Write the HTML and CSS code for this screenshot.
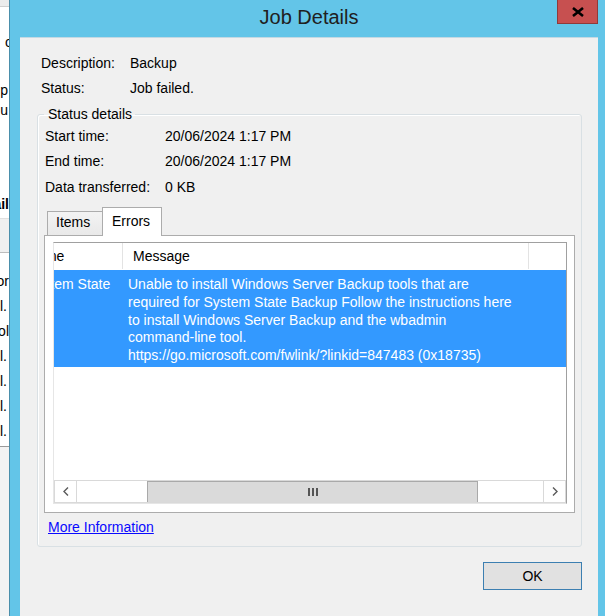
FILE: index.html
```html
<!DOCTYPE html>
<html lang="en">
<head>
<meta charset="utf-8">
<title>Job Details</title>
<link rel="stylesheet" href="styles.css">
</head>
<body>
<div class="desktop">
  <div class="bgapp">
    <div class="bg-head"></div>
    <div class="bg-line m-c"><span class="tail">c</span></div>
    <div class="bg-line m-p"><span class="tail1">p</span></div>
    <div class="bg-line m-u"><span class="tail1">u</span></div>
    <div class="bg-line m-ail bold"><span>ail</span></div>
    <div class="bg-band"></div>
    <div class="bg-rows">
      <div class="bg-row"><span>or</span></div>
      <div class="bg-row"><span class="tail2">l.</span></div>
      <div class="bg-row"><span>ol</span></div>
      <div class="bg-row"><span class="tail2">l.</span></div>
      <div class="bg-row"><span class="tail2">l.</span></div>
      <div class="bg-row"><span class="tail2">l.</span></div>
      <div class="bg-row"><span class="tail2">l.</span></div>
    </div>
    <div class="bg-foot"></div>
  </div>

  <div class="dialog">
    <div class="titlebar">
      <div class="title">Job Details</div>
      <div class="close">
        <svg width="14" height="10" viewBox="0 0 14 10"><path d="M2 1 L12 9 M12 1 L2 9" stroke="#000" stroke-width="2.6" fill="none"/></svg>
      </div>
    </div>
    <div class="client">
      <div class="info">
        <div class="kv"><span class="k">Description:</span><span>Backup</span></div>
        <div class="kv"><span class="k">Status:</span><span>Job failed.</span></div>
      </div>
      <fieldset class="group">
        <legend>Status details</legend>
        <div class="rows">
          <div class="kv2"><span class="k2">Start time:</span><span>20/06/2024 1:17 PM</span></div>
          <div class="kv2"><span class="k2">End time:</span><span>20/06/2024 1:17 PM</span></div>
          <div class="kv2"><span class="k2">Data transferred:</span><span>0 KB</span></div>
        </div>
        <div class="tabs">
          <div class="tab items">Items</div>
          <div class="tab sel">Errors</div>
        </div>
        <div class="panel">
          <div class="list">
            <div class="viewport">
              <div class="content">
                <div class="hdr">
                  <div class="c1">Name</div>
                  <div class="c2">Message</div>
                  <div class="c3"></div>
                </div>
                <div class="row">
                  <div class="c1">System State</div>
                  <div class="c2">Unable to install Windows Server Backup tools that are<br>required for System State Backup Follow the instructions here<br>to install Windows Server Backup and the wbadmin<br>command-line tool.<br>https://go.microsoft.com/fwlink/?linkid=847483 (0x18735)</div>
                  <div class="c3"></div>
                </div>
              </div>
            </div>
            <div class="hscroll">
              <div class="sb-btn left">
                <svg width="6" height="9" viewBox="0 0 6 9"><path d="M5 0.5 L1 4.5 L5 8.5" stroke="#5a5a5a" stroke-width="1.4" fill="none"/></svg>
              </div>
              <div class="sb-track t1"></div>
              <div class="sb-thumb">
                <svg width="10" height="8" viewBox="0 0 10 8"><rect x="0" y="0" width="2" height="8" fill="#555"/><rect x="4" y="0" width="2" height="8" fill="#555"/><rect x="8" y="0" width="2" height="8" fill="#555"/></svg>
              </div>
              <div class="sb-track t2"></div>
              <div class="sb-btn right">
                <svg width="6" height="9" viewBox="0 0 6 9"><path d="M1 0.5 L5 4.5 L1 8.5" stroke="#5a5a5a" stroke-width="1.4" fill="none"/></svg>
              </div>
            </div>
          </div>
        </div>
        <a class="more" href="#">More Information</a>
      </fieldset>
      <div class="buttons">
        <button class="ok">OK</button>
      </div>
    </div>
  </div>
</div>
</body>
</html>
```

FILE: styles.css
```css
html, body {
  margin: 0;
  padding: 0;
}

body {
  width: 605px;
  height: 616px;
  overflow: hidden;
  background: #ffffff;
  font-family: "Liberation Sans", Arial, sans-serif;
  font-size: 14px;
  color: #000;
}

.desktop {
  position: relative;
  width: 605px;
  height: 616px;
  overflow: hidden;
}

/* ---------- background application (mostly hidden) ---------- */
.bgapp {
  width: 9px;
  height: 616px;
  overflow: hidden;
  display: flex;
  flex-direction: column;
  background: #fff;
}

.bg-head {
  height: 6px;
  flex: none;
  background: #ececec;
  border-bottom: 1px solid #cfcfcf;
}

.bg-line {
  height: 16px;
  line-height: 16px;
  flex: none;
  display: flex;
  justify-content: flex-end;
  white-space: nowrap;
}

.bg-line.bold { font-weight: bold; }
.m-c { margin-top: 27px; }
.m-p { margin-top: 32px; }
.m-u { margin-top: 4px; }
.m-ail { margin-top: 78px; }

.tail { margin-right: -3px; }
.tail1 { margin-right: 1px; }
.tail2 { margin-right: 2px; }

.bg-band {
  flex: none;
  height: 33px;
  margin-top: 6px;
  background: #f0f0f0;
  border-top: 1px solid #e0e0e0;
  border-bottom: 1px solid #bdbdbd;
}

.bg-rows {
  margin-top: 16px;
  display: flex;
  flex-direction: column;
  flex: none;
}

.bg-row {
  height: 25px;
  line-height: 25px;
  display: flex;
  justify-content: flex-end;
  white-space: nowrap;
}

.bg-foot {
  margin-top: 2px;
  flex: 1;
  border-top: 1px solid #9a9a9a;
  background: #f3f3f3;
}

/* ---------- dialog window ---------- */
.dialog {
  position: absolute;
  left: 9px;
  top: 0;
  width: 596px;
  height: 640px;
  box-sizing: border-box;
  border-left: 1px solid #4a8fab;
  background: #63c5e8;
  padding: 0 7px 0 10px;
  display: flex;
  flex-direction: column;
}

.titlebar {
  height: 37px;
  flex: none;
  display: flex;
  align-items: flex-start;
}

.title {
  flex: 1;
  padding-left: 41px;
  padding-top: 7px;
  text-align: center;
  font-size: 20px;
  line-height: 20px;
  color: #202020;
}

.close {
  width: 41px;
  height: 24px;
  box-sizing: border-box;
  background: #c75050;
  border: 1px solid #8f3a3a;
  border-top: none;
  display: flex;
  align-items: center;
  justify-content: center;
}

.client {
  flex: 1;
  background: #f0f0f0;
  box-shadow: inset 0 1px 0 #c4d9e3;
  padding: 14px 16px 0 17px;
}

.info .kv {
  display: flex;
  height: 25px;
  line-height: 25px;
  padding-left: 4px;
}

.info .k { width: 89px; }

/* ---------- group box ---------- */
.group {
  margin: 5px 0 0 0;
  padding: 0 6px 11px 6px;
  min-width: 0;
  border: 1px solid #d9e0e4;
  border-radius: 3px;
  box-shadow: inset 1px 1px 0 #ffffff;
}

.group legend {
  padding: 0 3px 0 4px;
  line-height: 16px;
  font-size: 14px;
}

.rows {
  padding-top: 1.5px;
}

.rows .kv2 {
  display: flex;
  height: 25.5px;
  line-height: 25.5px;
  padding-left: 1px;
}

.rows .k2 { width: 120px; }

/* ---------- tabs ---------- */
.tabs {
  margin-top: 7px;
  height: 28px;
  display: flex;
  align-items: flex-end;
  padding-left: 3px;
}

.tab {
  box-sizing: border-box;
  border: 1px solid #acacac;
  border-bottom: none;
  line-height: 16px;
}

.tab.items {
  width: 55px;
  height: 24px;
  padding: 2px 0 0 8px;
  border-right: none;
  background: linear-gradient(#f3f3f3, #e9e9e9);
}

.tab.sel {
  position: relative;
  z-index: 1;
  width: 60px;
  height: 29px;
  margin-bottom: -1px;
  padding: 5px 0 0 9px;
  background: #ffffff;
}

.panel {
  box-sizing: border-box;
  height: 278px;
  border: 1px solid #acacac;
  background: #ffffff;
  padding: 6px 7px 8px 8px;
  display: flex;
}

/* ---------- list view ---------- */
.list {
  flex: 1;
  min-width: 0;
  display: flex;
  flex-direction: column;
  border: 1px solid;
  border-color: #a0a0a0 #a0a0a0 #e6e6e6 #e6e6e6;
  overflow: hidden;
}

.viewport {
  flex: 1;
  overflow: hidden;
}

.content {
  margin-left: -32px;
  width: max-content;
}

.hdr {
  display: flex;
  height: 26px;
  line-height: 26px;
  background: #fff;
}

.hdr > div {
  box-sizing: border-box;
  border-right: 1px solid #e3e3e3;
  white-space: nowrap;
  overflow: hidden;
}

.c1 { width: 101px; box-sizing: border-box; padding-left: 5px; white-space: nowrap; }
.c2 { width: 406px; box-sizing: border-box; padding-left: 5px; }
.c3 { width: 40px; }
.hdr .c2 { padding-left: 10px; }

.row {
  margin-top: 1px;
  display: flex;
  background: #3399ff;
  color: #ffffff;
  padding: 6px 0 2px 0;
  line-height: 17.75px;
}

.row .c2 { white-space: nowrap; }

/* ---------- horizontal scrollbar ---------- */
.hscroll {
  height: 23px;
  flex: none;
  box-sizing: border-box;
  border: 1px solid #d9d9d9;
  display: flex;
  background: #ffffff;
}

.sb-btn {
  width: 22px;
  box-sizing: border-box;
  display: flex;
  align-items: center;
  justify-content: center;
  background: #fff;
}

.sb-btn.left { border-right: 1px solid #d9d9d9; }
.sb-btn.right { border-left: 1px solid #d9d9d9; }

.sb-track.t1 { width: 70px; background: #fff; }
.sb-track.t2 { flex: 1; background: #fff; }

.sb-thumb {
  width: 331px;
  box-sizing: border-box;
  background: #dadada;
  border-top: 1px solid #a9a9a9;
  border-left: 1px solid #a9a9a9;
  border-right: 1px solid #a9a9a9;
  display: flex;
  align-items: center;
  justify-content: center;
}

.more {
  display: inline-block;
  margin: 6px 0 0 4px;
  line-height: 16px;
  color: #0a0aff;
  text-decoration: underline;
}

/* ---------- buttons ---------- */
.buttons {
  margin-top: 15px;
  display: flex;
  justify-content: flex-end;
}

.ok {
  width: 99px;
  height: 28px;
  box-sizing: border-box;
  border: 1px solid #3c7fb1;
  background: #e1e1e1;
  font-family: "Liberation Sans", Arial, sans-serif;
  font-size: 14px;
  color: #000;
  padding: 0;
}
```
